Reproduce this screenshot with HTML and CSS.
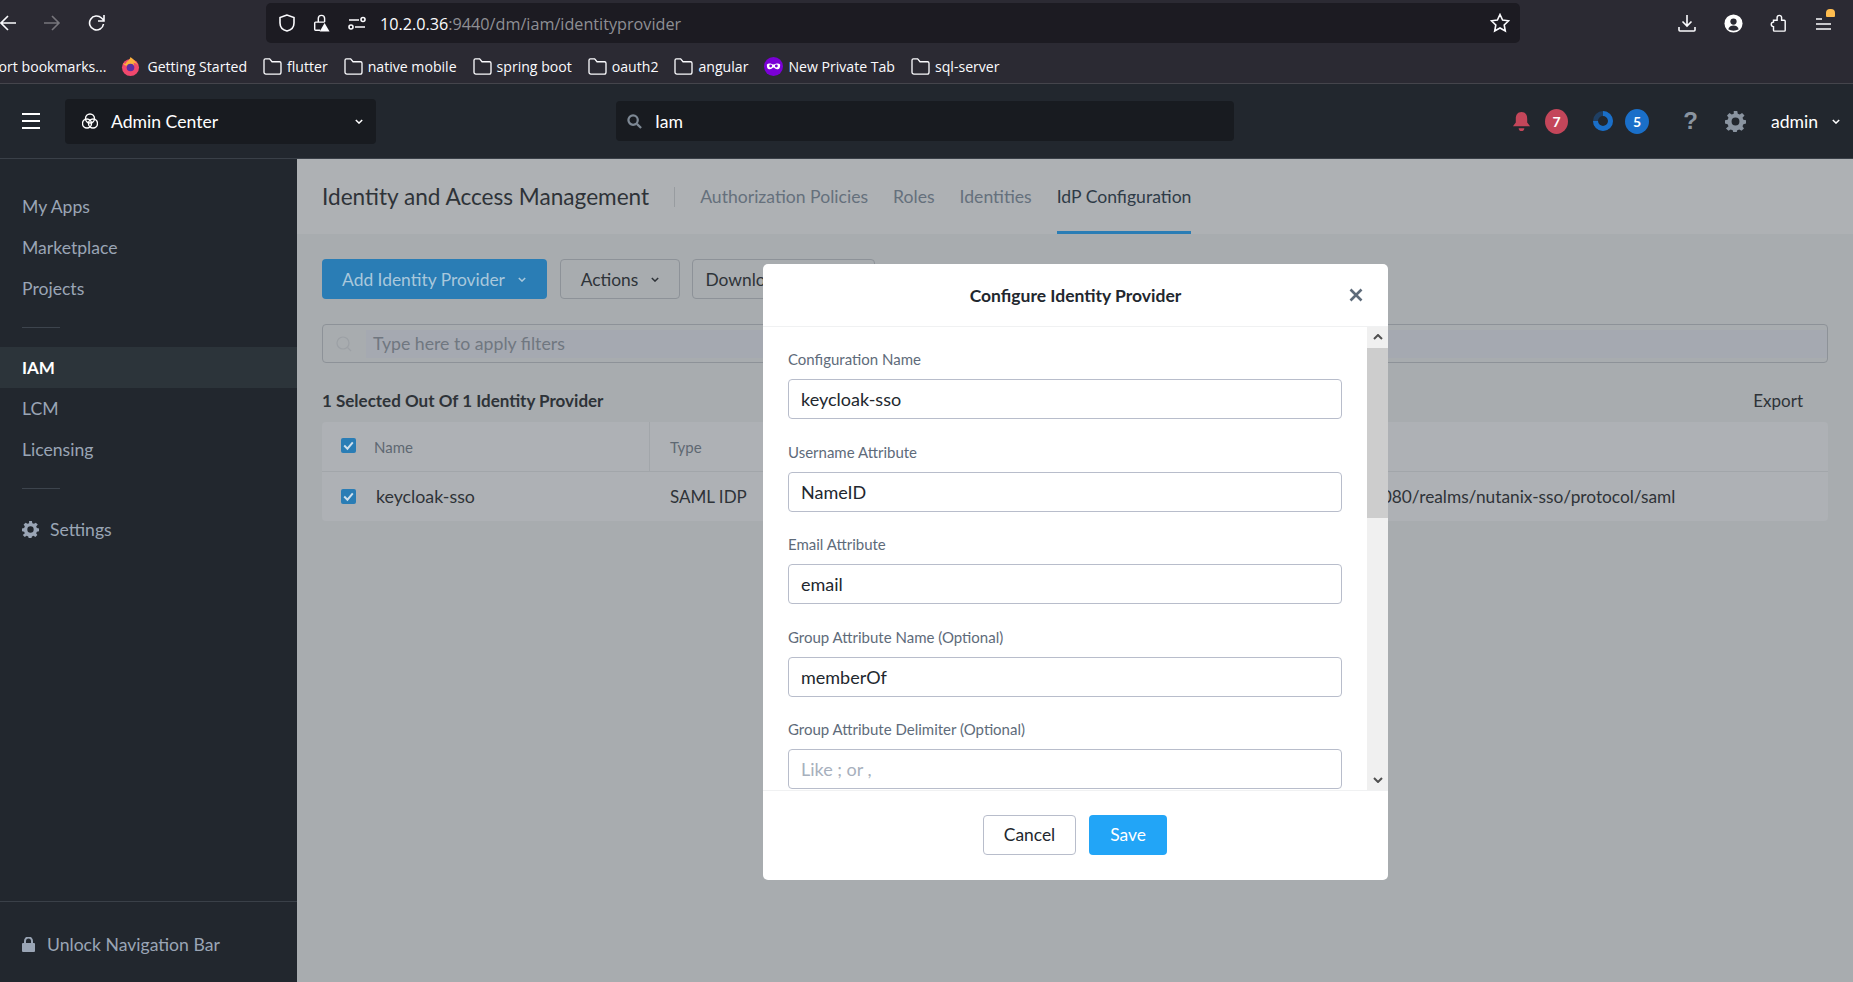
FILE: index.html
```html
<!DOCTYPE html>
<html>
<head>
  <title>Identity and Access Management</title>
  <link rel="stylesheet" href="styles.css">
</head>
<body>
  <div class="browser-bar">
    <svg class="ico back" viewBox="0 0 18 18"><path d="M17 9H2M9 2 2 9l7 7" /></svg>
    <svg class="ico forward" viewBox="0 0 18 18"><path d="M1 9h15M9 2l7 7-7 7" /></svg>
    <svg class="ico reload" viewBox="0 0 18 18"><path d="M15.5 10a7 7 0 1 1-2-6l2.500 2.500M16 1v6h-6" /></svg>
    <div class="url-bar">
      <svg class="ico" viewBox="0 0 18 18"><path d="M9 1 2 3.500V9c0 4 3 7 7 8 4-1 7-4 7-8V3.500z" /></svg>
      <svg class="ico lock-warn" viewBox="0 0 18 20"><path d="M6 9V5a3.500 3.500 0 0 1 7 0v4M8 18H3a1 1 0 0 1-1-1v-7a1 1 0 0 1 1-1h10" /><path class="fill" d="M13 10l5.500 9.500h-11z" /></svg>
      <svg class="ico tune" viewBox="0 0 18 18"><path d="M1 6h10M7 13h10" /><circle cx="15" cy="5.500" r="2" /><circle cx="3" cy="13" r="2" /></svg>
      <div class="url-text">10.2.0.36<span class="url-dim">:9440/dm/iam/identityprovider</span></div>
      <svg class="ico star" viewBox="0 0 20 20"><path d="m10 1.500 2.600 5.500 6 .8-4.400 4.200 1.100 6L10 15l-5.300 3 1.100-6-4.400-4.200 6-.8z" /></svg>
    </div>
    <div class="browser-tools">
      <svg class="ico" viewBox="0 0 18 18"><path d="M9 1v11M4.500 7.500 9 12l4.500-4.500M1 13v3a1 1 0 0 0 1 1h14a1 1 0 0 0 1-1v-3" /></svg>
      <svg class="account" viewBox="0 0 20 20"><circle cx="10" cy="10" r="9.500" fill="#fff" /><circle cx="10" cy="8" r="3.300" fill="#2b2a33" /><path d="M4.500 16c1-3 3-4 5.500-4s4.500 1 5.500 4c-3 2-8 2-11 0z" fill="#2b2a33" /></svg>
      <svg class="ico puzzle" viewBox="0 0 18 20"><path d="M4 7h4V4a2.500 2.500 0 0 1 5 0v3h3a1 1 0 0 1 1 1v10a1 1 0 0 1-1 1H5a1 1 0 0 1-1-1v-4a2.500 2.500 0 0 1 0-5z" /></svg>
      <div class="app-menu">
        <svg class="ico" viewBox="0 0 18 18"><path d="M1 5h6M1 10h15M1 15h15" /></svg>
        <span class="menu-dot"></span>
      </div>
    </div>
  </div>

  <div class="bookmarks">
    <span class="bm bm-import">Import bookmarks...</span>
    <span class="bm bm-first">
      <svg class="bm-logo" viewBox="0 0 20 20"><circle cx="10" cy="11" r="9" fill="#f1486d" /><path d="M2 6c1 1 2 1 3 1 1-3 4-3 5-7 2 2 7 5 8 10-1-3-3-4-5-4 2 3 0 7-3 7-3 0-4-2-4-4-2 0-3-1-4-3z" fill="#fbb13c" /><circle cx="10" cy="11" r="4" fill="#5b2da3" /></svg>
      Getting Started
    </span>
    <span class="bm"><svg class="folder" viewBox="0 0 20 18"><path d="M1 15V2.500A1.500 1.500 0 0 1 2.500 1H7l2.500 3H17.500A1.500 1.500 0 0 1 19 5.500V15a2 2 0 0 1-2 2H3a2 2 0 0 1-2-2z" /></svg>flutter</span>
    <span class="bm"><svg class="folder" viewBox="0 0 20 18"><path d="M1 15V2.500A1.500 1.500 0 0 1 2.500 1H7l2.500 3H17.500A1.500 1.500 0 0 1 19 5.500V15a2 2 0 0 1-2 2H3a2 2 0 0 1-2-2z" /></svg>native mobile</span>
    <span class="bm"><svg class="folder" viewBox="0 0 20 18"><path d="M1 15V2.500A1.500 1.500 0 0 1 2.500 1H7l2.500 3H17.500A1.500 1.500 0 0 1 19 5.500V15a2 2 0 0 1-2 2H3a2 2 0 0 1-2-2z" /></svg>spring boot</span>
    <span class="bm"><svg class="folder" viewBox="0 0 20 18"><path d="M1 15V2.500A1.500 1.500 0 0 1 2.500 1H7l2.500 3H17.500A1.500 1.500 0 0 1 19 5.500V15a2 2 0 0 1-2 2H3a2 2 0 0 1-2-2z" /></svg>oauth2</span>
    <span class="bm"><svg class="folder" viewBox="0 0 20 18"><path d="M1 15V2.500A1.500 1.500 0 0 1 2.500 1H7l2.500 3H17.500A1.500 1.500 0 0 1 19 5.500V15a2 2 0 0 1-2 2H3a2 2 0 0 1-2-2z" /></svg>angular</span>
    <span class="bm">
      <svg class="bm-logo" viewBox="0 0 20 20"><circle cx="10" cy="10" r="10" fill="#7a00d6" /><path d="M3 8c2-2 4-1 7 0 3-1 5-2 7 0 0 4-1 5-3 5s-3-2-4-2-2 2-4 2-3-1-3-5z" fill="#fff" /><circle cx="7" cy="9.500" r="1.500" fill="#7a00d6" /><circle cx="13" cy="9.500" r="1.500" fill="#7a00d6" /></svg>
      New Private Tab
    </span>
    <span class="bm"><svg class="folder" viewBox="0 0 20 18"><path d="M1 15V2.500A1.500 1.500 0 0 1 2.500 1H7l2.500 3H17.500A1.500 1.500 0 0 1 19 5.500V15a2 2 0 0 1-2 2H3a2 2 0 0 1-2-2z" /></svg>sql-server</span>
  </div>

  <div class="app-header">
    <div class="hamburger"><span></span><span></span><span></span></div>
    <div class="app-switch">
      <svg class="app-logo" viewBox="0 0 16 16"><circle cx="8" cy="5.500" r="4.500" /><circle cx="5" cy="10.500" r="4.500" /><circle cx="11" cy="10.500" r="4.500" /></svg>
      <span class="app-name">Admin Center</span>
      <svg class="chev" viewBox="0 0 10 6"><path d="M1 1l4 4 4-4" /></svg>
    </div>
    <div class="app-search">
      <svg class="search-ico" viewBox="0 0 16 16"><circle cx="6.500" cy="6.500" r="5" /><path d="M10.500 10.500 15 15" /></svg>
      <span>Iam</span>
    </div>
    <div class="header-right">
      <svg class="bell" viewBox="0 0 20 22"><path d="M10 1c4 0 6 3 6 7v4l3 4H1l3-4V8c0-4 2-7 6-7zM7 18h6c0 2-1.500 3-3 3s-3-1-3-3z" fill="#c4465a" /></svg>
      <span class="badge badge-red">7</span>
      <svg class="ring" viewBox="0 0 20 20"><circle cx="10" cy="10" r="7.500" stroke="#1f3f63" /><path d="M10 2.500a7.500 7.500 0 1 1-7.500 7.500" stroke="#1a6fc9" /></svg>
      <span class="badge badge-blue">5</span>
      <span class="help">?</span>
      <svg class="gear gear-top" viewBox="0 0 24 24"><path d="M10 1h4l.6 3 2.300 1 2.600-1.700 2.800 2.800L20 8.700l1 2.300 3 .6v3.800l-3 .6-1 2.300 1.700 2.600-2.800 2.800-2.600-1.700-2.300 1-.6 2h-4l-.6-2-2.300-1-2.600 1.700-2.800-2.800L4 18.300l-1-2.300-3-.6v-3.800l3-.6 1-2.300L2.300 6.100l2.800-2.800L7.700 5l2.300-1zM12 8.500a4.500 4.500 0 1 0 0 9 4.500 4.500 0 0 0 0-9z" transform="translate(0 -1)" fill-rule="evenodd" /></svg>
      <span class="user">admin</span>
      <svg class="chev" viewBox="0 0 10 6"><path d="M1 1l4 4 4-4" /></svg>
    </div>
  </div>

  <div class="app-body">
    <div class="sidebar">
      <div class="side-nav">
        <div class="side-item">My Apps</div>
        <div class="side-item">Marketplace</div>
        <div class="side-item">Projects</div>
        <div class="side-sep"><span></span></div>
        <div class="side-item active">IAM</div>
        <div class="side-item">LCM</div>
        <div class="side-item">Licensing</div>
        <div class="side-sep"><span></span></div>
        <div class="side-item settings">
          <svg class="gear" viewBox="0 0 24 24"><path d="M10 1h4l.6 3 2.300 1 2.600-1.700 2.800 2.800L20 8.700l1 2.300 3 .6v3.800l-3 .6-1 2.300 1.700 2.600-2.800 2.800-2.600-1.700-2.300 1-.6 2h-4l-.6-2-2.300-1-2.600 1.700-2.800-2.800L4 18.300l-1-2.300-3-.6v-3.800l3-.6 1-2.300L2.300 6.100l2.800-2.800L7.700 5l2.300-1zM12 8.500a4.500 4.500 0 1 0 0 9 4.500 4.500 0 0 0 0-9z" transform="translate(0 -1)" fill-rule="evenodd" /></svg>
          Settings
        </div>
      </div>
      <div class="side-foot">
        <svg class="lock" viewBox="0 0 13 15"><path d="M3 6V4a3.500 3.500 0 0 1 7 0v2" fill="none" stroke="#9aa5b5" stroke-width="2" /><rect y="6" width="13" height="9" rx="1" fill="#9aa5b5" /></svg>
        Unlock Navigation Bar
      </div>
    </div>

    <div class="main">
      <div class="subnav">
        <div class="page-title">Identity and Access Management</div>
        <div class="tabs">
          <div class="tab">Authorization Policies</div>
          <div class="tab">Roles</div>
          <div class="tab">Identities</div>
          <div class="tab active">IdP Configuration</div>
        </div>
      </div>

      <div class="content">
        <div class="actions">
          <div class="btn btn-primary">Add Identity Provider <svg class="chev" viewBox="0 0 10 6"><path d="M1 1l4 4 4-4" /></svg></div>
          <div class="btn btn-actions">Actions <svg class="chev" viewBox="0 0 10 6"><path d="M1 1l4 4 4-4" /></svg></div>
          <div class="btn btn-download">Download Metadata</div>
        </div>

        <div class="filter">
          <svg class="filter-ico" viewBox="0 0 16 16"><circle cx="7" cy="7" r="6" /><path d="M11.500 11.500 15 15" /></svg>
          <div class="filter-input">Type here to apply filters</div>
        </div>

        <div class="table-top">
          <div class="selected">1 Selected Out Of 1 Identity Provider</div>
          <div class="export">Export</div>
        </div>

        <div class="table">
          <div class="row row-head">
            <div class="cell cell-name">
              <span class="check"><svg viewBox="0 0 14 14"><path d="M3 7l3 3 5-6" /></svg></span>
              Name
            </div>
            <div class="cell cell-type">Type</div>
            <div class="cell cell-url"></div>
          </div>
          <div class="row">
            <div class="cell cell-name">
              <span class="check"><svg viewBox="0 0 14 14"><path d="M3 7l3 3 5-6" /></svg></span>
              <span class="row-name">keycloak-sso</span>
            </div>
            <div class="cell cell-type">SAML IDP</div>
            <div class="cell cell-url">http://10.2.0.36:8080/realms/nutanix-sso/protocol/saml</div>
          </div>
        </div>
      </div>

      <div class="modal">
        <div class="modal-head">
          <span class="modal-title">Configure Identity Provider</span>
          <svg class="modal-close" viewBox="0 0 14 14"><path d="M1.500 1.500l11 11M12.500 1.500l-11 11" /></svg>
        </div>
        <div class="modal-body">
          <div class="modal-form">
            <div class="field">
              <label>Configuration Name</label>
              <input type="text" value="keycloak-sso">
            </div>
            <div class="field">
              <label>Username Attribute</label>
              <input type="text" value="NameID">
            </div>
            <div class="field">
              <label>Email Attribute</label>
              <input type="text" value="email">
            </div>
            <div class="field">
              <label>Group Attribute Name (Optional)</label>
              <input type="text" value="memberOf">
            </div>
            <div class="field">
              <label>Group Attribute Delimiter (Optional)</label>
              <input type="text" placeholder="Like ; or ,">
            </div>
          </div>
          <div class="scrollbar">
            <svg class="scroll-arrow" viewBox="0 0 10 6"><path d="M1 5l4-4 4 4" /></svg>
            <div class="scroll-thumb"></div>
            <svg class="scroll-arrow" viewBox="0 0 10 6"><path d="M1 1l4 4 4-4" /></svg>
          </div>
        </div>
        <div class="modal-foot">
          <div class="btn btn-cancel">Cancel</div>
          <div class="btn btn-save">Save</div>
        </div>
      </div>
    </div>
  </div>
</body>
</html>
```

FILE: styles.css
```css
* { box-sizing: border-box; }
html, body {
  margin: 0;
  height: 982px;
  overflow: hidden;
}
body {
  display: flex;
  flex-direction: column;
  font-family: "Lato", "Liberation Sans", sans-serif;
  background-color: #22272e;
}

/* browser chrome */
.browser-bar {
  height: 43px;
  flex: none;
  display: flex;
  align-items: center;
  background-color: #2b2a33;
  padding-top: 3px;
  font-family: "Open Sans", sans-serif;
}
.ico {
  width: 18px;
  height: 18px;
  fill: none;
  stroke: #fbfbfe;
  stroke-width: 1.6;
  flex: none;
}
.back { margin-right: 26px; margin-left: -1px; }
.forward { stroke: #77767c; margin-right: 27px; }
.reload { margin-right: 160px; }
.url-bar {
  width: 1254px;
  height: 40px;
  background-color: #1c1b22;
  border-radius: 5px;
  display: flex;
  align-items: center;
  padding-left: 12px;
  padding-right: 10px;
}
.lock-warn { margin-left: 16px; }
.lock-warn .fill { fill: #fbfbfe; stroke: none; }
.tune { margin-left: 18px; width: 18px; }
.url-text {
  margin-left: 14px;
  padding-top: 1px;
  color: #fbfbfe;
  font-size: 16.2px;
  flex: 1;
}
.url-dim { color: #8f8f94; }
.star { width: 20px; height: 20px; }
.browser-tools {
  display: flex;
  align-items: center;
  gap: 28px;
  margin-left: 158px;
}
.puzzle { margin-left: -2px; }
.account { width: 19px; height: 19px; flex: none; }
.app-menu { position: relative; display: flex; }
.menu-dot {
  position: absolute;
  top: -5px;
  right: -2px;
  width: 9px;
  height: 8px;
  background-color: #ffbd4f;
  border-radius: 4px 4px 1px 1px;
}
.bookmarks {
  height: 41px;
  flex: none;
  display: flex;
  align-items: center;
  background-color: #2b2a33;
  border-bottom: 1px solid #45454c;
  color: #fbfbfe;
  font-family: "Open Sans", sans-serif;
  font-size: 14.1px;
  white-space: nowrap;
  gap: 16px;
  padding-top: 6px;
}
.bm { display: flex; align-items: center; gap: 5px; }
.bm-import { margin-left: -27px; }
.bm-first { margin-left: -1px; gap: 7px; }
.bm-logo { width: 19px; height: 19px; flex: none; }
.folder {
  width: 19px;
  height: 17px;
  fill: none;
  stroke: #fbfbfe;
  stroke-width: 1.4;
  flex: none;
}

/* app header */
.app-header {
  height: 75px;
  flex: none;
  display: flex;
  align-items: center;
  background-color: #22272e;
  border-bottom: 1px solid #3a4048;
  padding-left: 22px;
  color: #fff;
  position: relative;
  font-size: 17.6px;
}
.hamburger {
  width: 18px;
  height: 16px;
  display: flex;
  flex-direction: column;
  justify-content: space-between;
  margin-right: 25px;
}
.hamburger span {
  display: block;
  height: 2px;
  background-color: #fff;
}
.app-switch {
  width: 311px;
  height: 45px;
  background-color: #181b20;
  border-radius: 4px;
  display: flex;
  align-items: center;
  padding-left: 17px;
  padding-right: 13px;
  margin-right: 240px;
}
.app-logo {
  width: 16px;
  height: 16px;
  fill: none;
  stroke: #fff;
  stroke-width: 1.4;
  flex: none;
}
.app-name {
  margin-left: 13px;
  padding-top: 1px;
  flex: 1;
}
.chev {
  width: 8px;
  height: 5px;
  fill: none;
  stroke: currentColor;
  stroke-width: 1.8;
  flex: none;
}
.app-search {
  width: 618px;
  height: 40px;
  background-color: #181b20;
  border-radius: 4px;
  display: flex;
  align-items: center;
  padding-left: 11px;
}
.search-ico {
  width: 15px;
  height: 15px;
  fill: none;
  stroke: #7d8894;
  stroke-width: 2.4;
  margin-right: 13px;
}
.header-right {
  display: flex;
  align-items: center;
  margin-left: 278px;
}
.bell { width: 19px; height: 21px; margin-right: 14px; flex: none; }
.badge {
  width: 23px;
  height: 25px;
  border-radius: 50%;
  display: flex;
  align-items: center;
  justify-content: center;
  font-size: 14px;
  font-weight: 700;
}
.badge-red { background-color: #c4465a; margin-right: 25px; }
.badge-blue { background-color: #1a6fc9; margin-right: 34px; width: 24px; }
.ring {
  width: 20px;
  height: 20px;
  fill: none;
  stroke-width: 5;
  margin-right: 12px;
  flex: none;
}
.help {
  color: #8a94a0;
  font-size: 24px;
  font-weight: 900;
  width: 15px;
  margin-right: 27px;
  text-align: center;
  font-family: "Liberation Sans", sans-serif;
}
.gear { fill: #8a94a0; width: 17px; height: 17px; flex: none; }
.gear-top { width: 21px; height: 21px; margin-right: 25px; }
.user { margin-right: 14px; padding-top: 1px; }

/* app body */
.app-body {
  flex: 1;
  display: flex;
  position: relative;
  min-height: 0;
}
.sidebar {
  width: 297px;
  flex: none;
  display: flex;
  flex-direction: column;
  background-color: #22272e;
  color: #9aa5b5;
  font-size: 17.6px;
}
.side-nav { flex: 1; padding-top: 27px; }
.side-item {
  height: 41px;
  padding-left: 22px;
  display: flex;
  align-items: center;
}
.side-item.active {
  background-color: #2c343a;
  color: #fff;
  font-weight: 700;
  font-size: 17px;
}
.side-sep {
  height: 38px;
  padding: 18px 0 0 22px;
}
.side-sep span {
  display: block;
  width: 38px;
  height: 1px;
  background-color: #3d444d;
}
.settings { gap: 11px; margin-top: 1px; }
.settings .gear { fill: #9aa5b5; }
.side-foot {
  height: 81px;
  flex: none;
  border-top: 1px solid #3a4048;
  display: flex;
  align-items: center;
  gap: 12px;
  padding: 4px 0 0 22px;
}
.lock { width: 13px; height: 15px; flex: none; }

/* page under the dialog */
.main {
  flex: 1;
  min-width: 0;
  position: relative;
  background-color: #a8acaf;
  color: #2e3338;
}
.subnav {
  height: 75px;
  background-color: #aeb1b4;
  display: flex;
  align-items: center;
  padding-left: 25px;
}
.page-title {
  font-size: 22.6px;
  padding-right: 25px;
  border-right: 1px solid #989ca0;
  line-height: 20px;
}
.tabs {
  display: flex;
  gap: 25px;
  height: 75px;
  margin-left: 25px;
}
.tab {
  display: flex;
  align-items: center;
  font-size: 17.6px;
  color: #65707c;
  border-bottom: 3px solid transparent;
  padding-top: 3px;
}
.tab.active {
  color: #2e3b47;
  border-bottom-color: #2a7db5;
}
.content { padding: 25px 25px 0 25px; }
.actions { display: flex; gap: 13px; }
.btn {
  height: 40px;
  border-radius: 4px;
  display: flex;
  align-items: center;
  justify-content: center;
  font-size: 17.4px;
  white-space: nowrap;
}
.btn-primary {
  width: 225px;
  background-color: #2a7db5;
  color: #a9c8dc;
  gap: 13px;
  padding-right: 1px;
}
.btn-actions, .btn-download {
  border: 1px solid #8d9298;
}
.btn-actions { width: 120px; gap: 13px; }
.btn-download { width: 183px; margin-left: -1px; }
.filter {
  height: 39px;
  margin-top: 25px;
  border: 1px solid #8d9298;
  border-radius: 4px;
  display: flex;
  align-items: center;
  padding-left: 13px;
  font-size: 17.7px;
}
.filter-ico {
  width: 16px;
  height: 16px;
  fill: none;
  stroke: #9ca0a5;
  stroke-width: 1.2;
  flex: none;
  margin-right: 14px;
}
.filter-input {
  flex: 1;
  height: 28px;
  background-color: #a5a9b1;
  color: #707780;
  padding-left: 7px;
  display: flex;
  align-items: center;
}
.table-top {
  height: 59px;
  display: flex;
  align-items: center;
  justify-content: space-between;
  padding: 15px 25px 0 0;
}
.selected { font-size: 17px; font-weight: 700; }
.export { font-size: 17px; }
.table {
  background-color: #aeb1b5;
  border-radius: 4px;
}
.row {
  height: 49px;
  display: flex;
  align-items: center;
  font-size: 17px;
}
.row-head {
  height: 50px;
  border-bottom: 1px solid #a2a6aa;
  font-size: 15px;
  color: #5e6872;
}
.cell {
  height: 100%;
  display: flex;
  align-items: center;
  white-space: nowrap;
}
.cell-name {
  width: 328px;
  flex: none;
  padding-left: 19px;
  gap: 19px;
}
.row-head .cell-name {
  border-right: 1px solid #a2a6aa;
  gap: 18px;
  padding-top: 1px;
}
.row-name { margin: 0 0 2px 1px; font-size: 17.8px; }
.cell-type { width: 598px; flex: none; padding-left: 20px; }
.cell-url { font-size: 17.3px; }
.check {
  width: 15px;
  height: 15px;
  background-color: #2a7db5;
  border-radius: 2px;
  display: flex;
  flex: none;
}
.row-head .check { margin-top: -4px; }
.check svg {
  width: 15px;
  height: 15px;
  fill: none;
  stroke: #cfe0ec;
  stroke-width: 1.8;
}

/* dialog */
.modal {
  position: absolute;
  left: 466px;
  top: 105px;
  width: 625px;
  height: 616px;
  background-color: #fff;
  border-radius: 5px;
  display: flex;
  flex-direction: column;
  overflow: hidden;
}
.modal-head {
  height: 63px;
  flex: none;
  display: flex;
  align-items: center;
  justify-content: center;
  border-bottom: 1px solid #f0f1f2;
  position: relative;
}
.modal-title {
  font-size: 17.5px;
  font-weight: 700;
  color: #22272e;
}
.modal-close {
  position: absolute;
  right: 25px;
  top: 24px;
  width: 14px;
  height: 14px;
  fill: none;
  stroke: #5e6b7a;
  stroke-width: 2.6;
}
.modal-body {
  flex: 1;
  min-height: 0;
  display: flex;
}
.modal-form {
  flex: 1;
  overflow: hidden;
  padding: 22px 25px 0 25px;
}
.field { margin-bottom: 22.5px; }
.field label {
  display: block;
  height: 20px;
  line-height: 20px;
  margin-bottom: 10px;
  font-size: 15px;
  color: #5e6b7a;
}
.field input {
  display: block;
  width: 100%;
  height: 40px;
  padding: 0 10px 0 12px;
  border: 1px solid #b8bdcb;
  border-radius: 4px;
  font-family: inherit;
  font-size: 18px;
  color: #22272e;
}
.field input::placeholder { color: #a7b0bd; }
.scrollbar {
  width: 21px;
  flex: none;
  background-color: #f0f0f0;
  display: flex;
  flex-direction: column;
  align-items: center;
}
.scroll-arrow {
  width: 10px;
  height: 6px;
  fill: none;
  stroke: #505050;
  stroke-width: 2;
  flex: none;
}
.scrollbar .scroll-arrow:first-child { margin-top: 7px; }
.scrollbar .scroll-arrow:last-child { margin-top: auto; margin-bottom: 7px; }
.scroll-thumb {
  width: 100%;
  height: 170px;
  margin-top: 8px;
  background-color: #cdcdcd;
  flex: none;
}
.modal-foot {
  height: 90px;
  flex: none;
  border-top: 1px solid #f0f1f2;
  display: flex;
  align-items: center;
  justify-content: center;
  gap: 13px;
  padding: 0 1px 2px 0;
}
.btn-cancel {
  width: 93px;
  border: 1px solid #b8bdcb;
  color: #22272e;
}
.btn-save {
  width: 78px;
  background-color: #22a5f7;
  color: #fff;
}
```
